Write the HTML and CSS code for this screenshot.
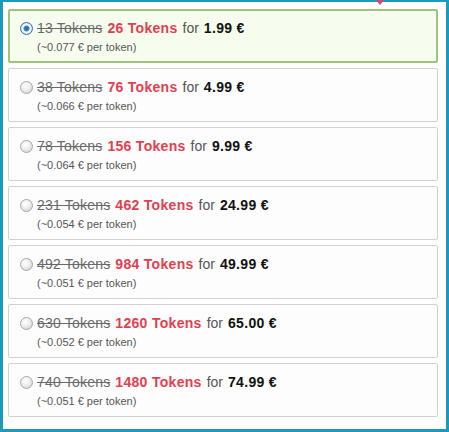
FILE: index.html
```html
<!DOCTYPE html>
<html lang="en">
<head>
  <meta charset="UTF-8" />
  <title>Buy Tokens</title>
  <link rel="stylesheet" href="styles.css">
</head>
<body>
  <div class="frame">
    <span class="pointer"></span>

    <label class="option selected">
      <div class="line">
        <span class="radio"></span>
        <span class="old">13 Tokens</span>
        <span class="new">26 Tokens</span>
        <span class="for">for</span>
        <span class="price">1.99 €</span>
      </div>
      <div class="per">(~0.077 € per token)</div>
    </label>

    <label class="option">
      <div class="line">
        <span class="radio"></span>
        <span class="old">38 Tokens</span>
        <span class="new">76 Tokens</span>
        <span class="for">for</span>
        <span class="price">4.99 €</span>
      </div>
      <div class="per">(~0.066 € per token)</div>
    </label>

    <label class="option">
      <div class="line">
        <span class="radio"></span>
        <span class="old">78 Tokens</span>
        <span class="new">156 Tokens</span>
        <span class="for">for</span>
        <span class="price">9.99 €</span>
      </div>
      <div class="per">(~0.064 € per token)</div>
    </label>

    <label class="option">
      <div class="line">
        <span class="radio"></span>
        <span class="old">231 Tokens</span>
        <span class="new">462 Tokens</span>
        <span class="for">for</span>
        <span class="price">24.99 €</span>
      </div>
      <div class="per">(~0.054 € per token)</div>
    </label>

    <label class="option">
      <div class="line">
        <span class="radio"></span>
        <span class="old">492 Tokens</span>
        <span class="new">984 Tokens</span>
        <span class="for">for</span>
        <span class="price">49.99 €</span>
      </div>
      <div class="per">(~0.051 € per token)</div>
    </label>

    <label class="option">
      <div class="line">
        <span class="radio"></span>
        <span class="old">630 Tokens</span>
        <span class="new">1260 Tokens</span>
        <span class="for">for</span>
        <span class="price">65.00 €</span>
      </div>
      <div class="per">(~0.052 € per token)</div>
    </label>

    <label class="option">
      <div class="line">
        <span class="radio"></span>
        <span class="old">740 Tokens</span>
        <span class="new">1480 Tokens</span>
        <span class="for">for</span>
        <span class="price">74.99 €</span>
      </div>
      <div class="per">(~0.051 € per token)</div>
    </label>
  </div>
</body>
</html>
```

FILE: styles.css
```css
html, body {
  margin: 0;
  padding: 0;
  font-family: "Liberation Sans", Arial, sans-serif;
  background-color: #ffffff;
}
.frame {
  position: relative;
  box-sizing: border-box;
  width: 449px;
  height: 432px;
  border: 3px solid #1a9bbd;
  border-top-width: 2px;
  padding: 7px 8px 0 5px;
  display: flex;
  flex-direction: column;
  gap: 5px;
  background-color: #ffffff;
}
.pointer {
  position: absolute;
  top: -2px;
  left: 373px;
  width: 0;
  height: 0;
  border-left: 4px solid transparent;
  border-right: 4px solid transparent;
  border-top: 5px solid #e0456e;
}
.option {
  display: block;
  border: 1px solid #d4d0d0;
  border-radius: 2px;
  background-color: #fdfdfd;
  padding: 9px 11px 7px;
  cursor: pointer;
}
.option.selected {
  border: 2px solid #9cc47c;
  background-color: #f6fdef;
  padding: 8px 10px 6px;
}
.line {
  display: flex;
  align-items: center;
  height: 18px;
  font-size: 14px;
  white-space: nowrap;
}
.radio {
  box-sizing: border-box;
  width: 13px;
  height: 13px;
  border-radius: 50%;
  border: 1px solid #a8a8a8;
  background: radial-gradient(circle at 40% 35%, #ffffff 0%, #eeeeee 45%, #c8c8c8 100%);
  margin-right: 4px;
  flex: none;
}
.selected .radio {
  border-color: #3e6fa8;
  background: radial-gradient(circle, #1f5fa8 0, #3a86d0 2.5px, #ffffff 3.5px, #dcecf8 5px, #a8c8e8 6px);
}
.old {
  color: #6a6a6a;
  text-decoration: line-through;
  letter-spacing: 0.2px;
}
.new {
  color: #e2404f;
  font-weight: bold;
  margin-left: 5px;
  letter-spacing: 0.3px;
}
.for {
  color: #555555;
  margin-left: 5px;
}
.price {
  color: #111111;
  font-weight: bold;
  margin-left: 5px;
  letter-spacing: 0.3px;
}
.per {
  margin: 2px 0 0 17px;
  line-height: 16px;
  font-size: 11px;
  color: #555555;
}
```
